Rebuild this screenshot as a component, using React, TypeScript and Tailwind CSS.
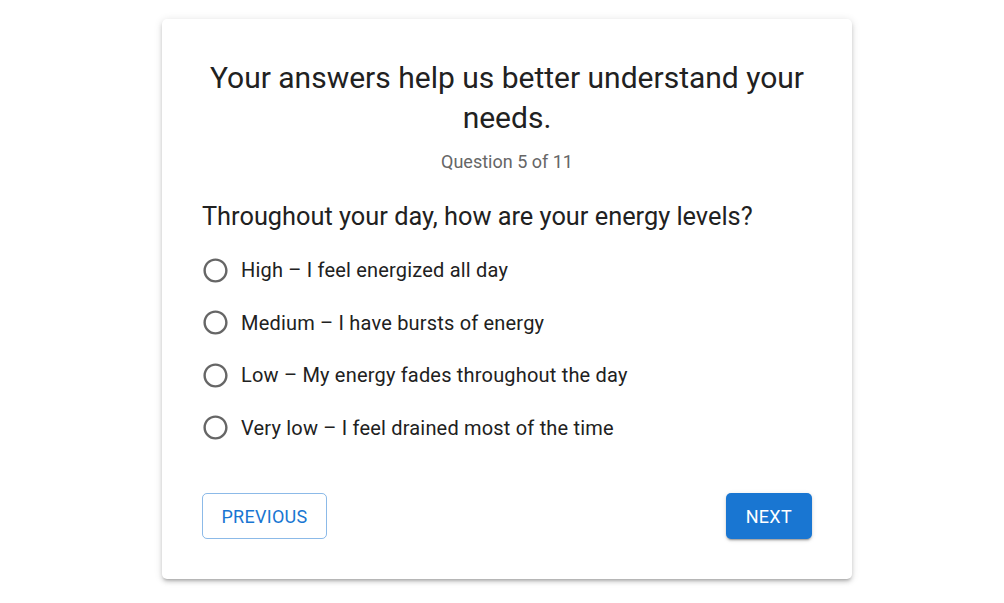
import React from "react";

const options = [
  "High – I feel energized all day",
  "Medium – I have bursts of energy",
  "Low – My energy fades throughout the day",
  "Very low – I feel drained most of the time",
];

function RadioIcon() {
  return (
    <svg width="29" height="29" viewBox="0 0 24 24" className="shrink-0 -ml-[1px]">
      <path
        fill="#666666"
        d="M12 2C6.48 2 2 6.48 2 12s4.48 10 10 10 10-4.48 10-10S17.52 2 12 2zm0 18c-4.42 0-8-3.58-8-8s3.58-8 8-8 8 3.58 8 8-3.58 8-8 8z"
      />
    </svg>
  );
}

export default function App() {
  return (
    <div
      className="w-[1004px] h-[603px] bg-white flex justify-center pt-[19px] pl-[10px]"
      style={{ fontFamily: "Roboto, 'Noto Sans', sans-serif" }}
    >
      <div className="w-[690px] h-[560px] bg-white rounded-[5px] shadow-[0_3px_3px_-2px_rgba(0,0,0,0.2),0_3px_4px_0_rgba(0,0,0,0.14),0_1px_8px_0_rgba(0,0,0,0.12)] px-[40px] pt-[39px] flex flex-col">
        <h1 className="text-[30px] leading-[40px] text-center text-[#212121]">
          Your answers help us better understand your needs.
        </h1>
        <p className="mt-[12px] text-[18px] leading-[24px] text-center text-[#666666]">
          Question 5 of 11
        </p>
        <h2 className="mt-[26px] text-[25.35px] leading-[32px] text-[#212121]">
          Throughout your day, how are your energy levels?
        </h2>
        <div className="mt-[17px] flex flex-col gap-[10px]">
          {options.map((o) => (
            <label key={o} className="flex items-center h-[42.5px] gap-[11px] cursor-pointer">
              <RadioIcon />
              <span className="text-[20px] tracking-[0.19px] leading-[28px] text-[#212121]">{o}</span>
            </label>
          ))}
        </div>
        <div className="mt-[44px] flex justify-between">
          <button className="h-[46px] w-[125px] rounded-[5px] border border-[rgba(25,118,210,0.5)] text-[#1976d2] text-[18px] tracking-[0.3px] uppercase">
            Previous
          </button>
          <button className="h-[46px] px-[20px] rounded-[5px] bg-[#1976d2] text-white text-[18px] tracking-[0.3px] uppercase shadow-[0_3px_1px_-2px_rgba(0,0,0,0.2),0_2px_2px_0_rgba(0,0,0,0.14),0_1px_5px_0_rgba(0,0,0,0.12)]">
            Next
          </button>
        </div>
      </div>
    </div>
  );
}
